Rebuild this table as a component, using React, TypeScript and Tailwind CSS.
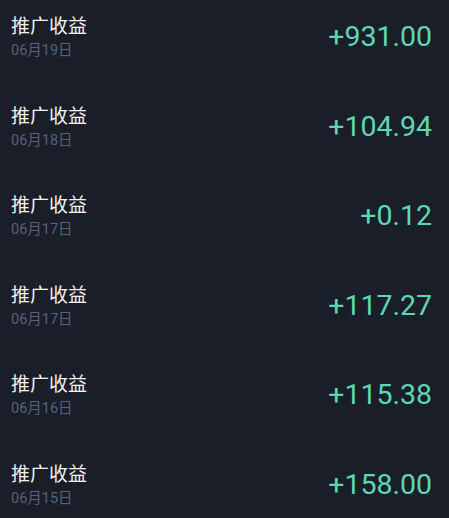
import React from "react";

type Row = { title: string; date: string; amount: string };

const rows: Row[] = [
  { title: "推广收益", date: "06月19日", amount: "+931.00" },
  { title: "推广收益", date: "06月18日", amount: "+104.94" },
  { title: "推广收益", date: "06月17日", amount: "+0.12" },
  { title: "推广收益", date: "06月17日", amount: "+117.27" },
  { title: "推广收益", date: "06月16日", amount: "+115.38" },
  { title: "推广收益", date: "06月15日", amount: "+158.00" },
];

const font = { fontFamily: "Roboto, 'Noto Sans CJK SC', sans-serif" };

export default function App() {
  return (
    <div className="w-[449px] h-[518px] overflow-hidden bg-[#1a1e28]" style={font}>
      {rows.map((row, i) => (
        <div key={i} className="flex h-[89.6px] items-start justify-between pl-[11px] pr-[17px] pt-[15px]">
          <div className="flex flex-col">
            <span className="text-[19px] leading-[24px] text-[#f2f2f2]">{row.title}</span>
            <span className="mt-[2px] text-[14.5px] leading-[20px] text-[#5c6075]">{row.date}</span>
          </div>
          <span className="mt-[5px] text-[28.5px] leading-[34px] text-[#5cd8b5]">{row.amount}</span>
        </div>
      ))}
    </div>
  );
}
